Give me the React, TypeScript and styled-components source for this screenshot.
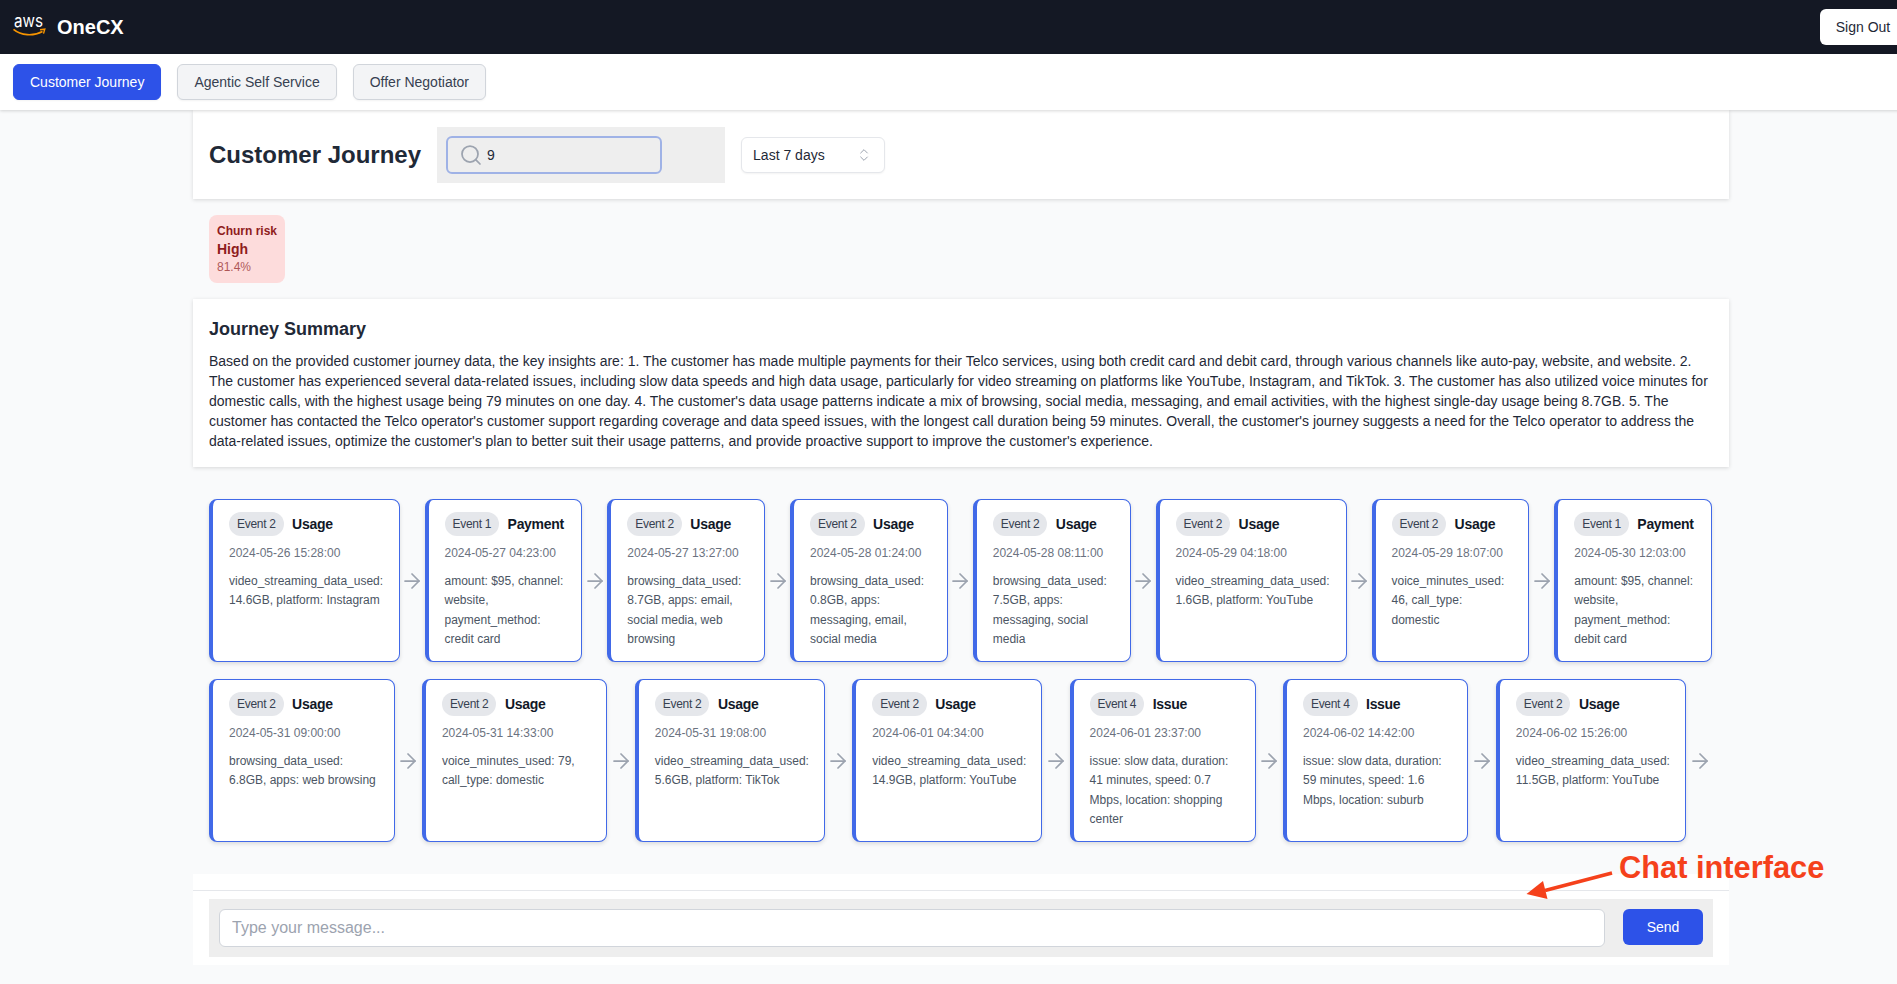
import { ArrowRight, ChevronsUpDown, Search } from "lucide-react";
import styled, { createGlobalStyle } from "styled-components";

interface JourneyEvent {
  badge: string;
  title: string;
  date: string;
  detail: string;
  width: number;
}

const firstRow: JourneyEvent[] = [
  { badge: "Event 2", title: "Usage", date: "2024-05-26 15:28:00", detail: "video_streaming_data_used: 14.6GB, platform: Instagram", width: 190.5 },
  { badge: "Event 1", title: "Payment", date: "2024-05-27 04:23:00", detail: "amount: $95, channel: website, payment_method: credit card", width: 157.75 },
  { badge: "Event 2", title: "Usage", date: "2024-05-27 13:27:00", detail: "browsing_data_used: 8.7GB, apps: email, social media, web browsing", width: 157.75 },
  { badge: "Event 2", title: "Usage", date: "2024-05-28 01:24:00", detail: "browsing_data_used: 0.8GB, apps: messaging, email, social media", width: 157.75 },
  { badge: "Event 2", title: "Usage", date: "2024-05-28 08:11:00", detail: "browsing_data_used: 7.5GB, apps: messaging, social media", width: 157.75 },
  { badge: "Event 2", title: "Usage", date: "2024-05-29 04:18:00", detail: "video_streaming_data_used: 1.6GB, platform: YouTube", width: 191 },
  { badge: "Event 2", title: "Usage", date: "2024-05-29 18:07:00", detail: "voice_minutes_used: 46, call_type: domestic", width: 157.75 },
  { badge: "Event 1", title: "Payment", date: "2024-05-30 12:03:00", detail: "amount: $95, channel: website, payment_method: debit card", width: 157.75 },
];

const secondRow: JourneyEvent[] = [
  { badge: "Event 2", title: "Usage", date: "2024-05-31 09:00:00", detail: "browsing_data_used: 6.8GB, apps: web browsing", width: 185.5 },
  { badge: "Event 2", title: "Usage", date: "2024-05-31 14:33:00", detail: "voice_minutes_used: 79, call_type: domestic", width: 185.5 },
  { badge: "Event 2", title: "Usage", date: "2024-05-31 19:08:00", detail: "video_streaming_data_used: 5.6GB, platform: TikTok", width: 190 },
  { badge: "Event 2", title: "Usage", date: "2024-06-01 04:34:00", detail: "video_streaming_data_used: 14.9GB, platform: YouTube", width: 190 },
  { badge: "Event 4", title: "Issue", date: "2024-06-01 23:37:00", detail: "issue: slow data, duration: 41 minutes, speed: 0.7 Mbps, location: shopping center", width: 186 },
  { badge: "Event 4", title: "Issue", date: "2024-06-02 14:42:00", detail: "issue: slow data, duration: 59 minutes, speed: 1.6 Mbps, location: suburb", width: 185.5 },
  { badge: "Event 2", title: "Usage", date: "2024-06-02 15:26:00", detail: "video_streaming_data_used: 11.5GB, platform: YouTube", width: 190 },
];

const summary =
  "Based on the provided customer journey data, the key insights are: 1. The customer has made multiple payments for their Telco services, using both credit card and debit card, through various channels like auto-pay, website, and website. 2. The customer has experienced several data-related issues, including slow data speeds and high data usage, particularly for video streaming on platforms like YouTube, Instagram, and TikTok. 3. The customer has also utilized voice minutes for domestic calls, with the highest usage being 79 minutes on one day. 4. The customer's data usage patterns indicate a mix of browsing, social media, messaging, and email activities, with the highest single-day usage being 8.7GB. 5. The customer has contacted the Telco operator's customer support regarding coverage and data speed issues, with the longest call duration being 59 minutes. Overall, the customer's journey suggests a need for the Telco operator to address the data-related issues, optimize the customer's plan to better suit their usage patterns, and provide proactive support to improve the customer's experience.";

const TimelineLine = ({ events, gap, trailing }: { events: JourneyEvent[]; gap: number; trailing?: boolean }) => (
  <TimelineRow>
    {events.map((event, i) => (
      <TimelineItem key={event.date}>
        <EventCard $width={event.width}>
          <CardHead>
            <Badge>{event.badge}</Badge>
            <CardTitle>{event.title}</CardTitle>
          </CardHead>
          <CardDate>{event.date}</CardDate>
          <CardDetail>{event.detail}</CardDetail>
        </EventCard>
        {(trailing || i < events.length - 1) && (
          <ArrowCell $width={gap}>
            <ArrowRight size={24} strokeWidth={1.75} />
          </ArrowCell>
        )}
      </TimelineItem>
    ))}
  </TimelineRow>
);

const App = () => {
  return (
    <Page>
      <GlobalStyle />
      <Header>
        <Brand>
          <LogoMark width="34" height="24" viewBox="0 0 34 24" aria-label="aws">
            <text
              x="1"
              y="12"
              fill="#fff"
              fontFamily="Inter, sans-serif"
              fontSize="18"
              textLength="29"
              lengthAdjust="spacingAndGlyphs"
            >
              aws
            </text>
            <path d="M.5 14.4C8 20.6 20 21.6 29.5 16.4" fill="none" stroke="#f79400" strokeWidth="1.7" />
            <path d="M27 14.8l4.8-.6-1.3 4.4" fill="none" stroke="#f79400" strokeWidth="1.4" />
          </LogoMark>
          <BrandName>OneCX</BrandName>
        </Brand>
        <SignOut>Sign Out</SignOut>
      </Header>

      <TabBar>
        <Tab $active>Customer Journey</Tab>
        <Tab>Agentic Self Service</Tab>
        <Tab>Offer Negotiator</Tab>
      </TabBar>

      <Main>
        <TitleCard>
          <PageTitle>Customer Journey</PageTitle>
          <SearchArea>
            <SearchBox>
              <Search size={24} strokeWidth={1.75} color="#9ca3af" />
              <SearchValue>9</SearchValue>
            </SearchBox>
          </SearchArea>
          <RangeSelect>
            <span>Last 7 days</span>
            <ChevronsUpDown size={16} strokeWidth={1.5} color="#9ca3af" />
          </RangeSelect>
        </TitleCard>

        <ChurnCard>
          <ChurnLabel>Churn risk</ChurnLabel>
          <ChurnLevel>High</ChurnLevel>
          <ChurnScore>81.4%</ChurnScore>
        </ChurnCard>

        <SummaryCard>
          <SummaryTitle>Journey Summary</SummaryTitle>
          <SummaryText>{summary}</SummaryText>
        </SummaryCard>

        <Timeline>
          <TimelineLine events={firstRow} gap={25} />
          <TimelineLine events={secondRow} gap={27.4} trailing />
        </Timeline>

        <ChatPanel>
          <ChatTools>
            <ChatInput placeholder="Type your message..." />
            <SendButton>Send</SendButton>
          </ChatTools>
        </ChatPanel>
      </Main>

      <Callout>
        <CalloutText>Chat interface</CalloutText>
        <svg width="92" height="32" viewBox="0 0 92 32">
          <path d="M86 3 19 20.5" stroke="#f5411b" strokeWidth="3.6" fill="none" />
          <path d="M.5 24 17 11l4.5 18z" fill="#f5411b" />
        </svg>
      </Callout>
    </Page>
  );
};

const GlobalStyle = createGlobalStyle`
  html, body {
    margin: 0;
    overflow-x: hidden;
    background: #f9fafb;
  }
  * {
    box-sizing: border-box;
  }
  button, input {
    font-family: inherit;
  }
`;

const Page = styled.div`
  position: relative;
  width: 1922px;
  min-height: 984px;
  background: #f9fafb;
  font-family: "Liberation Sans", Arial, sans-serif;
  color: #1f2937;
`;

const Header = styled.header`
  height: 54px;
  padding: 0 16px 0 13px;
  background: #141824;
  display: flex;
  align-items: center;
  justify-content: space-between;
`;

const Brand = styled.div`
  display: flex;
  align-items: center;
  gap: 10px;
`;

const LogoMark = styled.svg`
  overflow: visible;
`;

const BrandName = styled.span`
  color: #fff;
  font-size: 20px;
  font-weight: 700;
`;

const SignOut = styled.button`
  width: 86px;
  height: 36px;
  border: 0;
  border-radius: 6px;
  background: #fff;
  color: #1f2937;
  font-size: 14px;
`;

const TabBar = styled.nav`
  position: relative;
  z-index: 2;
  height: 56px;
  padding: 10px 13px;
  background: #fff;
  display: flex;
  gap: 16px;
  box-shadow: 0 1px 3px rgba(0, 0, 0, 0.16);
`;

const Tab = styled.button<{ $active?: boolean }>`
  height: 36px;
  padding: 0 16px;
  border: 1px solid ${(p) => (p.$active ? "#2d52e8" : "#d1d5db")};
  border-radius: 6px;
  background: ${(p) => (p.$active ? "#2d52e8" : "#f3f4f6")};
  color: ${(p) => (p.$active ? "#fff" : "#374151")};
  font-size: 14px;
  box-shadow: 0 1px 2px rgba(0, 0, 0, 0.05);
`;

const Main = styled.main`
  width: 1536px;
  margin: 0 auto;
  display: flex;
  flex-direction: column;
`;

const TitleCard = styled.section`
  height: 89px;
  padding: 1px 16px 0;
  background: #fff;
  display: flex;
  align-items: center;
  gap: 16px;
  box-shadow: 0 1px 4px rgba(0, 0, 0, 0.14);
`;

const PageTitle = styled.h1`
  margin: 0;
  font-size: 24px;
  font-weight: 700;
  white-space: nowrap;
`;

const SearchArea = styled.div`
  width: 288px;
  height: 56px;
  padding: 9px 63px 9px 9px;
  background: #eeeeee;
`;

const SearchBox = styled.div`
  height: 38px;
  padding: 0 11px;
  border: 2px solid #9fb2e6;
  border-radius: 6px;
  display: flex;
  align-items: center;
  gap: 4px;
`;

const SearchValue = styled.span`
  font-size: 14px;
`;

const RangeSelect = styled.div`
  width: 144px;
  height: 36px;
  padding: 0 12px 0 11px;
  border: 1px solid #e5e7eb;
  border-radius: 6px;
  background: #fff;
  display: flex;
  align-items: center;
  justify-content: space-between;
  font-size: 14px;
  box-shadow: 0 1px 2px rgba(0, 0, 0, 0.05);
`;

const ChurnCard = styled.div`
  width: 76px;
  height: 68px;
  margin: 16px 0 16px 16px;
  padding: 8px;
  border-radius: 8px;
  background: #fddcdc;
  color: #8f1c1c;
`;

const ChurnLabel = styled.div`
  font-size: 12px;
  line-height: 16px;
  font-weight: 700;
  white-space: nowrap;
`;

const ChurnLevel = styled.div`
  font-size: 14px;
  line-height: 20px;
  font-weight: 700;
`;

const ChurnScore = styled.div`
  font-size: 12px;
  line-height: 16px;
  opacity: 0.7;
`;

const SummaryCard = styled.section`
  height: 168px;
  padding: 16px;
  background: #fff;
  box-shadow: 0 1px 4px rgba(0, 0, 0, 0.14);
`;

const SummaryTitle = styled.h2`
  margin: 0 0 8px;
  font-size: 18px;
  line-height: 28px;
  font-weight: 700;
`;

const SummaryText = styled.p`
  margin: 0;
  font-size: 14px;
  line-height: 20px;
  color: #1f2937;
`;

const Timeline = styled.div`
  margin: 32px 0;
  padding: 0 16px;
  display: flex;
  flex-direction: column;
  gap: 17px;
`;

const TimelineRow = styled.div`
  display: flex;
`;

const TimelineItem = styled.div`
  display: flex;
  align-items: center;
`;

const EventCard = styled.article<{ $width: number }>`
  width: ${(p) => p.$width}px;
  height: 163px;
  padding: 12px 15px 12px 16px;
  border: 1px solid #4169e8;
  border-left-width: 4px;
  border-radius: 8px;
  background: #fff;
  box-shadow: 0 2px 4px rgba(0, 0, 0, 0.12);
`;

const CardHead = styled.div`
  display: flex;
  align-items: center;
  gap: 8.5px;
  margin-bottom: 9px;
`;

const Badge = styled.span`
  height: 24px;
  padding: 0 8px;
  border-radius: 12px;
  background: #e5e7eb;
  color: #374151;
  font-size: 12px;
  line-height: 24px;
  letter-spacing: -0.3px;
  white-space: nowrap;
`;

const CardTitle = styled.span`
  font-size: 14px;
  font-weight: 700;
  letter-spacing: -0.3px;
  color: #111827;
`;

const CardDate = styled.div`
  font-size: 12px;
  line-height: 16px;
  color: #6b7280;
  white-space: nowrap;
`;

const CardDetail = styled.p`
  margin: 10.5px 0 0;
  font-size: 12px;
  line-height: 19.5px;
  color: #4b5563;
`;

const ArrowCell = styled.div<{ $width: number }>`
  width: ${(p) => p.$width}px;
  display: flex;
  justify-content: center;
  color: #9ca3af;
`;

const ChatPanel = styled.section`
  height: 91px;
  padding: 16px 16px 0;
  background: #fff;
  position: relative;
  &::before {
    content: "";
    position: absolute;
    left: 0;
    right: 0;
    top: 16px;
    border-top: 1px solid #e5e7eb;
  }
`;

const ChatTools = styled.div`
  height: 58px;
  margin-top: 9px;
  padding: 10px;
  background: #eeeeee;
  display: flex;
  align-items: flex-start;
  gap: 18.5px;
`;

const ChatInput = styled.input`
  flex: 1;
  height: 38px;
  padding: 0 12px;
  border: 1px solid #d1d5db;
  border-radius: 6px;
  background: #fff;
  font-size: 16px;
  &::placeholder {
    color: #9ca3af;
  }
`;

const SendButton = styled.button`
  width: 80px;
  height: 36px;
  border: 0;
  border-radius: 6px;
  background: #2d52e8;
  color: #fff;
  font-size: 14px;
`;

const Callout = styled.div`
  position: absolute;
  left: 1526px;
  top: 850px;
  width: 300px;
  height: 50px;
  svg {
    position: absolute;
    left: 0;
    top: 20px;
  }
`;

const CalloutText = styled.span`
  position: absolute;
  left: 93px;
  top: 0;
  color: #f5411b;
  font-size: 30.8px;
  font-weight: 700;
  white-space: nowrap;
`;

export default App;
